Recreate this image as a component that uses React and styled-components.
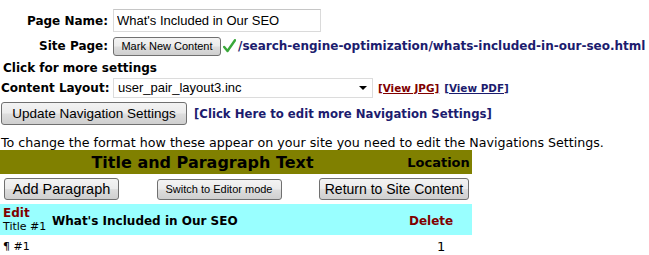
import React from "react";
import styled, { createGlobalStyle } from "styled-components";

const Global = createGlobalStyle`
  html, body { margin: 0; padding: 0; background: #fff; }
  body { font-family: "DejaVu Sans", Verdana, sans-serif; font-size: 12px; color: #000; }
`;

const Page = styled.div`
  padding: 9px 0 0 1px;
  width: 648px;
  display: flex;
  flex-direction: column;
`;

const FormRow = styled.div`
  display: flex;
  align-items: center;
  height: ${(p) => p.$h};
  margin-top: ${(p) => p.$mt || "0"};
  gap: ${(p) => p.$gap || "0"};
`;

const Label = styled.label`
  font-weight: bold;
  font-size: 12px;
  width: 107px;
  margin-right: ${(p) => p.$mr || "5px"};
  text-align: right;
  white-space: nowrap;
`;

const Heading = styled.div`
  font-weight: bold;
  font-size: 12px;
  padding-left: 2px;
  white-space: nowrap;
`;

const TextInput = styled.input`
  width: 208px;
  height: 23px;
  box-sizing: border-box;
  border: 1px solid #dadada;
  border-top-color: #c6c6c6;
  font-family: "Liberation Sans", Arial, sans-serif;
  font-size: 13px;
  padding: 0 3px;
  margin: 0;
  outline: none;
`;

const Btn = styled.button`
  font-family: "Liberation Sans", Arial, sans-serif;
  font-size: ${(p) => p.$fs || "13.5px"};
  height: ${(p) => p.$h || "22px"};
  width: ${(p) => p.$w};
  padding: 0;
  border: 1px solid #707070;
  border-radius: 3px;
  background: linear-gradient(#f3f3f3 0%, #ebebeb 48%, #dddddd 52%, #cfcfcf 100%);
  color: #000;
  white-space: nowrap;
  margin: 0;
  box-sizing: border-box;
  flex: none;
`;

const PathText = styled.span`
  font-weight: bold;
  font-size: 12px;
  color: #1c1c6e;
  white-space: nowrap;
  margin-left: 2px;
`;

const SelectBox = styled.div`
  width: 260px;
  height: 20px;
  box-sizing: border-box;
  border: 1px solid #dcdcdc;
  display: flex;
  align-items: center;
  justify-content: space-between;
  font-family: "Liberation Sans", Arial, sans-serif;
  font-size: 13px;
  padding: 0 5px 0 4px;
`;

const Arrow = styled.span`
  width: 0;
  height: 0;
  border-left: 4px solid transparent;
  border-right: 4px solid transparent;
  border-top: 4px solid #000;
`;

const ViewLink = styled.a`
  font-weight: bold;
  font-size: 10.4px;
  color: ${(p) => p.$c};
  text-decoration: underline;
  white-space: nowrap;
`;

const NavLink = styled.span`
  font-weight: bold;
  font-size: 11.7px;
  color: #1c1c6e;
  white-space: nowrap;
`;

const Note = styled.div`
  font-size: 12.65px;
  margin-top: 11px;
  white-space: nowrap;
  line-height: 14px;
  height: 14px;
`;

const Table = styled.div`
  width: 472px;
  margin-left: -1px;
  display: flex;
  flex-direction: column;
  gap: 2px;
`;

const HeadBar = styled.div`
  background: #808000;
  height: 24px;
  display: flex;
  align-items: center;
`;

const HeadTitle = styled.div`
  font-weight: bold;
  font-size: 16px;
  width: 405px;
  text-align: center;
`;

const HeadLoc = styled.div`
  font-weight: bold;
  font-size: 13px;
  flex: 1;
  text-align: center;
`;

const BtnRow = styled.div`
  display: flex;
  align-items: center;
  justify-content: space-between;
  padding: 2px 3px 2px 4px;
  height: 26px;
  box-sizing: border-box;
`;

const CyanRow = styled.div`
  background: #99ffff;
  height: 31px;
  display: flex;
  align-items: center;
  padding-left: 3px;
`;

const EditCol = styled.div`
  display: flex;
  flex-direction: column;
  width: 49px;
  line-height: 14px;
  padding-top: 1px;
`;

const EditLink = styled.span`
  color: #800000;
  font-weight: bold;
  font-size: 12px;
`;

const Small = styled.span`
  font-size: 11px;
`;

const RowTitle = styled.div`
  font-weight: bold;
  font-size: 12px;
  width: 357px;
  padding-top: 2px;
`;

const DeleteLink = styled.span`
  color: #800000;
  font-weight: bold;
  font-size: 12px;
  padding-top: 2px;
`;

const ParaRow = styled.div`
  display: flex;
  align-items: center;
  padding: 1px 0 0 3px;
  height: 16px;
`;

const ParaLabel = styled.span`
  font-size: 11px;
  width: 434px;
`;

const LocNum = styled.span`
  font-size: 13px;
`;

function Check() {
  return (
    <svg width="13" height="14" viewBox="0 0 13 14" style={{ marginLeft: 2 }}>
      <path d="M1.2 8 L4.5 12 L12 1.2" stroke="#3aa83a" strokeWidth="2.4" fill="none" strokeLinecap="round" strokeLinejoin="round" />
    </svg>
  );
}

export default function App() {
  return (
    <Page>
      <Global />
      <FormRow $h="23px">
        <Label>Page Name:</Label>
        <TextInput defaultValue="What's Included in Our SEO" />
      </FormRow>
      <FormRow $h="18px" $mt="5px">
        <Label>Site Page:</Label>
        <Btn $fs="11px" $h="19px" $w="108px">Mark New Content</Btn>
        <Check />
        <PathText>/search-engine-optimization/whats-included-in-our-seo.html</PathText>
      </FormRow>
      <FormRow $h="16px" $mt="5px">
        <Heading>Click for more settings</Heading>
      </FormRow>
      <FormRow $h="19px" $mt="2px" $gap="5px">
        <Label $mr="0">Content Layout:</Label>
        <SelectBox>
          <span>user_pair_layout3.inc</span>
          <Arrow />
        </SelectBox>
        <ViewLink $c="#800000">[View JPG]</ViewLink>
        <ViewLink $c="#1c1c6e">[View PDF]</ViewLink>
      </FormRow>
      <FormRow $h="23px" $mt="5px" $gap="7px">
        <Btn $h="23px" $w="186px">Update Navigation Settings</Btn>
        <NavLink>[Click Here to edit more Navigation Settings]</NavLink>
      </FormRow>
      <Note>To change the format how these appear on your site you need to edit the Navigations Settings.</Note>
      <Table>
        <HeadBar>
          <HeadTitle>Title and Paragraph Text</HeadTitle>
          <HeadLoc>Location</HeadLoc>
        </HeadBar>
        <BtnRow>
          <Btn $fs="14.5px" $h="22px" $w="115px">Add Paragraph</Btn>
          <Btn $fs="11px" $h="21px" $w="125px">Switch to Editor mode</Btn>
          <Btn $fs="14px" $h="22px" $w="150px">Return to Site Content</Btn>
        </BtnRow>
        <CyanRow>
          <EditCol>
            <EditLink>Edit</EditLink>
            <Small>Title #1</Small>
          </EditCol>
          <RowTitle>What's Included in Our SEO</RowTitle>
          <DeleteLink>Delete</DeleteLink>
        </CyanRow>
        <ParaRow>
          <ParaLabel>¶ #1</ParaLabel>
          <LocNum>1</LocNum>
        </ParaRow>
      </Table>
    </Page>
  );
}
